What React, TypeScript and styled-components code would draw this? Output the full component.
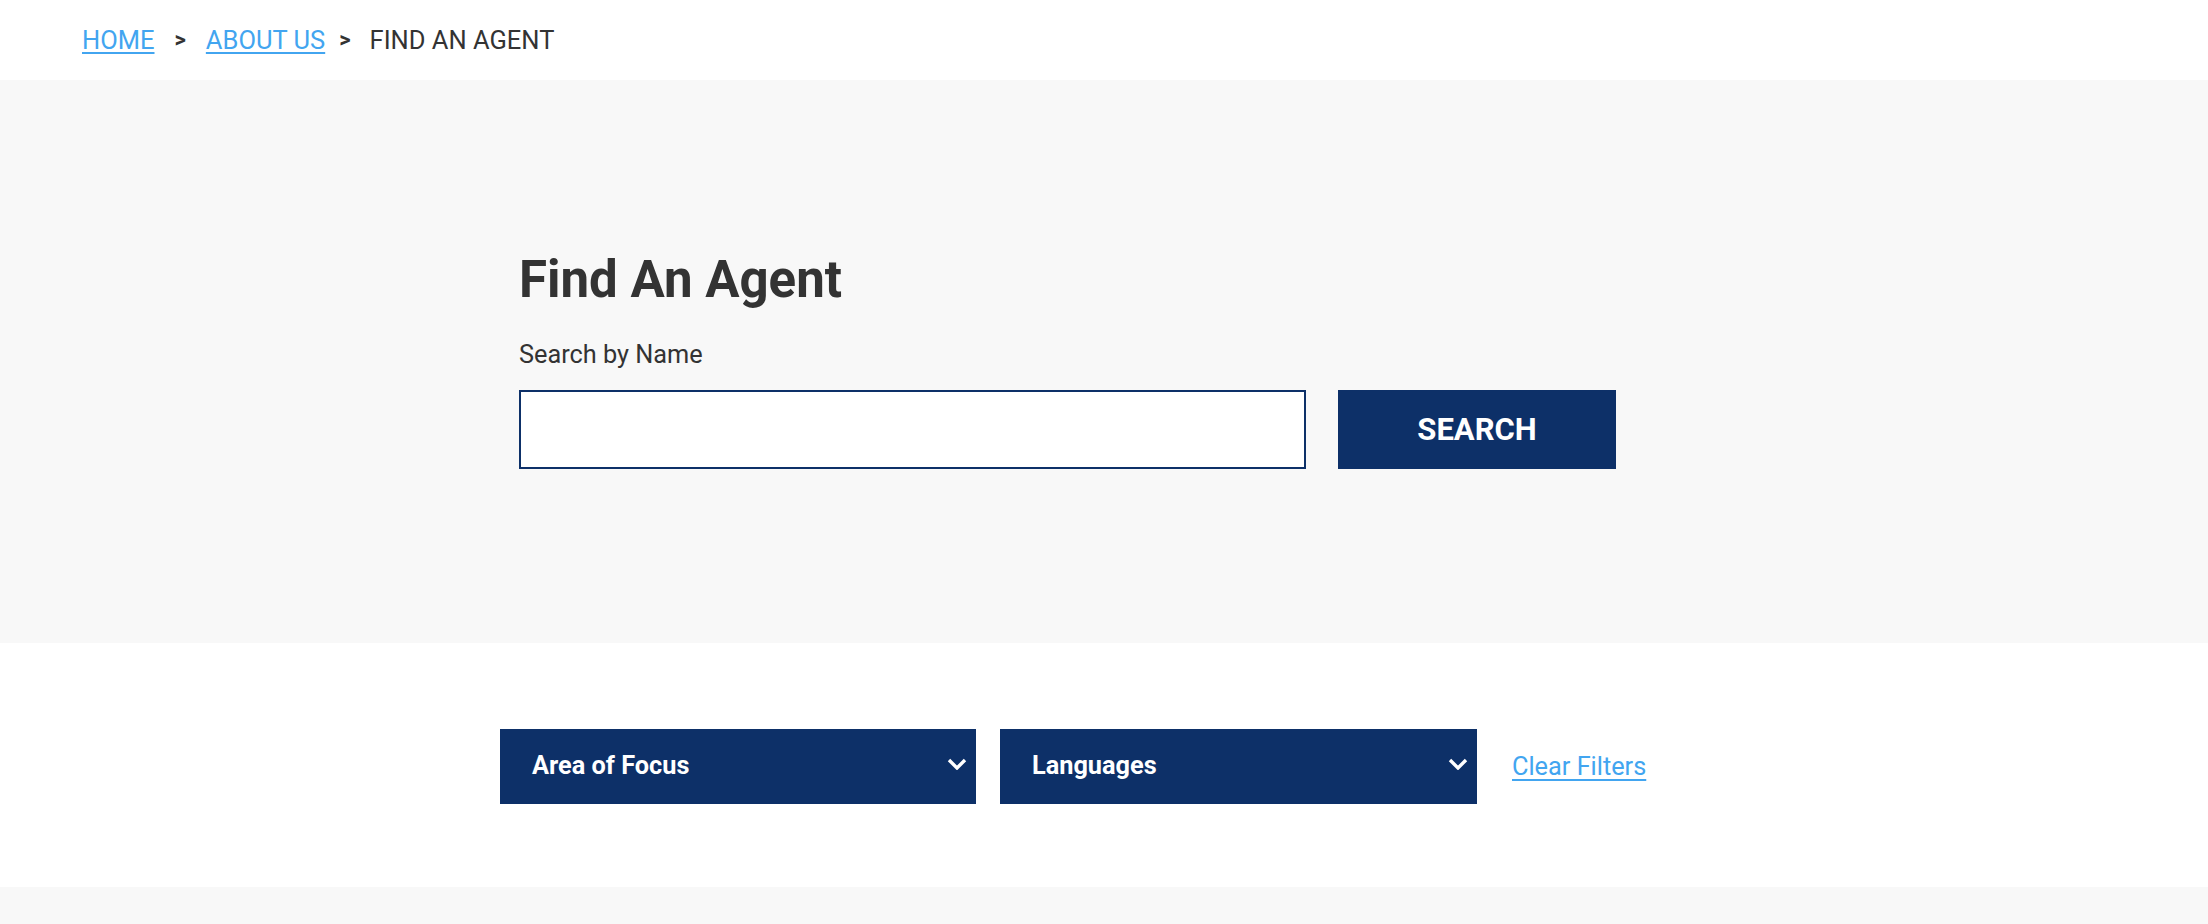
import styled, { createGlobalStyle } from 'styled-components';

const GlobalStyle = createGlobalStyle`
    html, body {
        margin: 0;
        padding: 0;
        background: #ffffff;
        font-family: Roboto, 'Liberation Sans', Arial, sans-serif;
        color: #333333;
        overflow: hidden;
    }
    * {
        box-sizing: border-box;
    }
`;

const colors = {
    navy: '#0d3068',
    link: '#42a5f0',
    text: '#333333',
    gray: '#f8f8f8',
};

const Breadcrumb = styled.nav`
    height: 80px;
    padding: 0 0 1px 82px;
    display: flex;
    align-items: center;
    font-size: 25.5px;
    color: ${colors.text};
`;

const Crumb = styled.a`
    color: ${colors.link};
    text-decoration: underline;
    text-underline-offset: 3px;
    text-decoration-thickness: 2px;
`;

const Separator = styled.span<{ $before?: number; $after?: number }>`
    margin: 0 ${(p) => p.$after ?? 20}px 0 ${(p) => p.$before ?? 20}px;
    font-weight: 700;
    font-size: 22px;
`;

const Current = styled.span`
    color: ${colors.text};
`;

const Hero = styled.section`
    background: ${colors.gray};
    height: 563px;
    padding-top: 165px;
`;

const Container = styled.div`
    width: 1170px;
    margin: 0 auto;
`;

const Title = styled.h1`
    margin: 0;
    font-size: 51px;
    line-height: 70px;
    font-weight: 700;
    color: ${colors.text};
`;

const Label = styled.label`
    display: block;
    margin-top: 24px;
    font-size: 25.3px;
    line-height: 32px;
    color: ${colors.text};
`;

const SearchRow = styled.div`
    display: flex;
    gap: 32px;
    margin-top: 19px;
`;

const SearchInput = styled.input`
    width: 787px;
    height: 79px;
    border: 2px solid ${colors.navy};
    background: #ffffff;
    font-size: 25px;
    padding: 0 16px;
    outline: none;
`;

const SearchBtn = styled.button`
    width: 278px;
    height: 79px;
    border: none;
    background: ${colors.navy};
    color: #ffffff;
    font-family: Roboto, 'Liberation Sans', Arial, sans-serif;
    font-size: 31px;
    font-weight: 700;
    cursor: pointer;
`;

const Filters = styled.section`
    height: 244px;
    padding-top: 86px;
`;

const FilterRow = styled.div`
    width: 1208px;
    margin: 0 auto;
    display: flex;
    align-items: center;
    gap: 24px;
`;

const Select = styled.div<{ $width: number }>`
    width: ${(p) => p.$width}px;
    height: 75px;
    background: ${colors.navy};
    color: #ffffff;
    display: flex;
    align-items: center;
    justify-content: space-between;
    padding: 0 9px 2px 32px;
    font-size: 25.3px;
    font-weight: 700;
    cursor: pointer;
`;

const Chevron = styled.svg`
    width: 20px;
    height: 12px;
    margin-top: -4px;
`;

const ClearLink = styled.a`
    margin-left: 11px;
    font-size: 25.3px;
    color: ${colors.link};
    text-decoration: underline;
    text-underline-offset: 4px;
    text-decoration-thickness: 2px;
    cursor: pointer;
`;

const Footer = styled.div`
    height: 37px;
    background: ${colors.gray};
`;

function ChevronDown() {
    return (
        <Chevron viewBox="0 0 20 12" fill="none">
            <path d="M2 2 L10 10 L18 2" stroke="#ffffff" strokeWidth="3.4" />
        </Chevron>
    );
}

function App() {
    return (
        <>
            <GlobalStyle />
            <Breadcrumb>
                <Crumb>HOME</Crumb>
                <Separator>&gt;</Separator>
                <Crumb>ABOUT US</Crumb>
                <Separator $before={14} $after={19}>&gt;</Separator>
                <Current>FIND AN AGENT</Current>
            </Breadcrumb>
            <Hero>
                <Container>
                    <Title>Find An Agent</Title>
                    <Label htmlFor="agent-name">Search by Name</Label>
                    <SearchRow>
                        <SearchInput id="agent-name" type="text" />
                        <SearchBtn>SEARCH</SearchBtn>
                    </SearchRow>
                </Container>
            </Hero>
            <Filters>
                <FilterRow>
                    <Select $width={476}>
                        Area of Focus
                        <ChevronDown />
                    </Select>
                    <Select $width={477}>
                        Languages
                        <ChevronDown />
                    </Select>
                    <ClearLink>Clear Filters</ClearLink>
                </FilterRow>
            </Filters>
            <Footer />
        </>
    );
}

export default App;
